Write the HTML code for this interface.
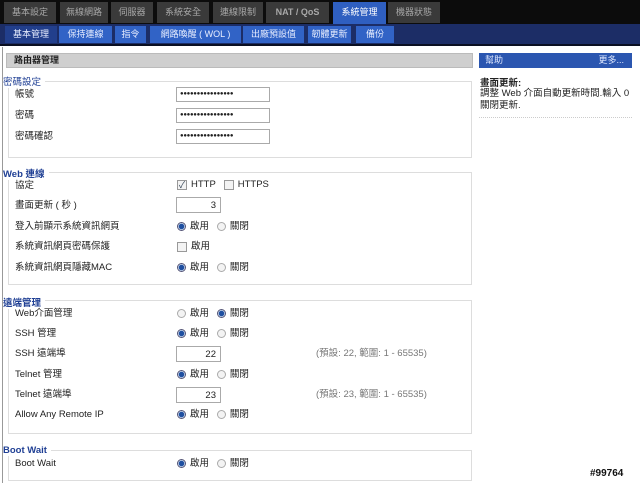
<!DOCTYPE html>
<html><head><meta charset="utf-8">
<style>
*{margin:0;padding:0;box-sizing:border-box}
body{width:640px;height:483px;overflow:hidden;background:#fff;font-family:"Liberation Sans","Noto Sans CJK TC",sans-serif;font-size:9px;color:#222;position:relative}
.a{position:absolute}
#top{left:0;top:0;width:640px;height:24px;background:#0c0c0c}
.t{position:absolute;top:2px;height:21px;background:#3a3a3a;color:#a8a8a8;font-size:9px;line-height:21px;text-align:center}
.t.on{background:#2f5fc0;color:#fff;height:22px}
#sub{left:0;top:24px;width:640px;height:22px;background:#1c2d66;border-bottom:2px solid #0a0f22}
.s{position:absolute;top:2px;height:17px;background:#3163c6;color:#e8eeff;font-size:9px;line-height:17px;text-align:center}
.s.on{background:#223f8c}
.hdr{background:#cfcfcf;border:1px solid #bbb;height:15px;line-height:13px;font-weight:bold;padding-left:7px;font-size:9px}
.leg{position:absolute;left:3px;color:#1f3f94;font-weight:bold;font-size:9.5px;background:#fff;padding-right:4px}
.box{position:absolute;left:8px;width:464px;border:1px solid #ddd}
.lbl{position:absolute;left:15px;font-size:9.5px;line-height:11px}
.inp{position:absolute;left:176px;width:94px;height:15px;border:1px solid #aaa;font-size:6px;line-height:13px;padding-left:3px;letter-spacing:-0.3px}
.num{position:absolute;left:176px;width:45px;height:16px;border:1px solid #aaa;text-align:right;padding-right:4px;line-height:15px;font-size:9.5px}
.r{position:absolute;display:flex;align-items:center;font-size:9.5px;line-height:11px}
.rd{width:9px;height:9px;border-radius:50%;border:1px solid #aaa;background:#f3f3f3;margin-right:4px;display:inline-block}
.rd.on{background:radial-gradient(circle,#1f4fa0 0 2.5px,#cfe0f3 3px);border-color:#557}
.cb{width:10px;height:10px;border:1px solid #999;background:#f3f3f3;margin-right:4px;display:inline-block;font-size:9px;line-height:8px;text-align:center;color:#345}
.note{position:absolute;left:316px;color:#777;font-size:9.5px;line-height:11px}
</style></head><body>
<div id="top" class="a">
<div class="t" style="left:4px;width:52px">基本設定</div>
<div class="t" style="left:60px;width:48px">無線網路</div>
<div class="t" style="left:111px;width:42px">伺服器</div>
<div class="t" style="left:157px;width:52px">系統安全</div>
<div class="t" style="left:213px;width:50px">連線限制</div>
<div class="t" style="left:266px;width:63px;font-weight:bold">NAT / QoS</div>
<div class="t on" style="left:333px;width:53px">系統管理</div>
<div class="t" style="left:388px;width:52px">機器狀態</div>
</div>
<div id="sub" class="a">
<div class="s on" style="left:5px;width:52px">基本管理</div>
<div class="s" style="left:59px;width:53px">保持連線</div>
<div class="s" style="left:115px;width:31px">指令</div>
<div class="s" style="left:150px;width:91px">網路喚醒 ( WOL )</div>
<div class="s" style="left:243px;width:61px">出廠預設值</div>
<div class="s" style="left:308px;width:43px">韌體更新</div>
<div class="s" style="left:356px;width:38px">備份</div>
</div>
<div class="a" style="left:2px;top:47px;width:1px;height:436px;background:#999"></div>
<div class="a hdr" style="left:6px;top:53px;width:467px">路由器管理</div>

<div class="box" style="top:81px;height:77px"></div>
<div class="leg" style="top:74px;font-weight:normal">密碼設定</div>
<div class="lbl" style="top:89px">帳號</div>
<div class="inp" style="top:87px">●●●●●●●●●●●●●●●●</div>
<div class="lbl" style="top:110px">密碼</div>
<div class="inp" style="top:108px">●●●●●●●●●●●●●●●●</div>
<div class="lbl" style="top:131px">密碼確認</div>
<div class="inp" style="top:129px">●●●●●●●●●●●●●●●●</div>

<div class="box" style="top:172px;height:113px"></div>
<div class="leg" style="top:166px">Web 連線</div>
<div class="lbl" style="top:180px">協定</div>
<div class="r" style="left:177px;top:179px"><span class="cb">✓</span>HTTP&nbsp;&nbsp;&nbsp;<span class="cb"></span>HTTPS</div>
<div class="lbl" style="top:200px">畫面更新 ( 秒 )</div>
<div class="num" style="top:197px">3</div>
<div class="lbl" style="top:221px">登入前顯示系統資訊網頁</div>
<div class="r" style="left:177px;top:221px"><span class="rd on"></span>啟用&nbsp;&nbsp;&nbsp;<span class="rd"></span>關閉</div>
<div class="lbl" style="top:241px">系統資訊網頁密碼保護</div>
<div class="r" style="left:177px;top:241px"><span class="cb"></span>啟用</div>
<div class="lbl" style="top:262px">系統資訊網頁隱藏MAC</div>
<div class="r" style="left:177px;top:262px"><span class="rd on"></span>啟用&nbsp;&nbsp;&nbsp;<span class="rd"></span>關閉</div>

<div class="box" style="top:300px;height:134px"></div>
<div class="leg" style="top:295px">遠端管理</div>
<div class="lbl" style="top:308px">Web介面管理</div>
<div class="r" style="left:177px;top:308px"><span class="rd"></span>啟用&nbsp;&nbsp;&nbsp;<span class="rd on"></span>關閉</div>
<div class="lbl" style="top:328px">SSH 管理</div>
<div class="r" style="left:177px;top:328px"><span class="rd on"></span>啟用&nbsp;&nbsp;&nbsp;<span class="rd"></span>關閉</div>
<div class="lbl" style="top:348px">SSH 遠端埠</div>
<div class="num" style="top:346px">22</div>
<div class="note" style="top:348px">(預設: 22, 範圍: 1 - 65535)</div>
<div class="lbl" style="top:369px">Telnet 管理</div>
<div class="r" style="left:177px;top:369px"><span class="rd on"></span>啟用&nbsp;&nbsp;&nbsp;<span class="rd"></span>關閉</div>
<div class="lbl" style="top:389px">Telnet 遠端埠</div>
<div class="num" style="top:387px">23</div>
<div class="note" style="top:389px">(預設: 23, 範圍: 1 - 65535)</div>
<div class="lbl" style="top:409px">Allow Any Remote IP</div>
<div class="r" style="left:177px;top:409px"><span class="rd on"></span>啟用&nbsp;&nbsp;&nbsp;<span class="rd"></span>關閉</div>

<div class="box" style="top:450px;height:31px"></div>
<div class="leg" style="top:445px">Boot Wait</div>
<div class="lbl" style="top:458px">Boot Wait</div>
<div class="r" style="left:177px;top:458px"><span class="rd on"></span>啟用&nbsp;&nbsp;&nbsp;<span class="rd"></span>關閉</div>

<div class="a" style="left:479px;top:53px;width:153px;height:15px;background:#2b56b0;color:#dfe8ff;line-height:15px;padding:0 8px 0 6px;display:flex;justify-content:space-between;font-size:9px"><span>幫助</span><span>更多...</span></div>
<div class="a" style="left:480px;top:75px;font-weight:bold;font-size:9.5px">畫面更新:</div>
<div class="a" style="left:480px;top:88px;width:150px;font-size:9.5px;line-height:12px">調整 Web 介面自動更新時間.輸入 0<br>關閉更新.</div>
<div class="a" style="left:479px;top:117px;width:153px;border-top:1px dotted #ccc"></div>
<div class="a" style="left:590px;top:468px;font-weight:bold;font-size:10px;color:#111">#99764</div>
</body></html>
